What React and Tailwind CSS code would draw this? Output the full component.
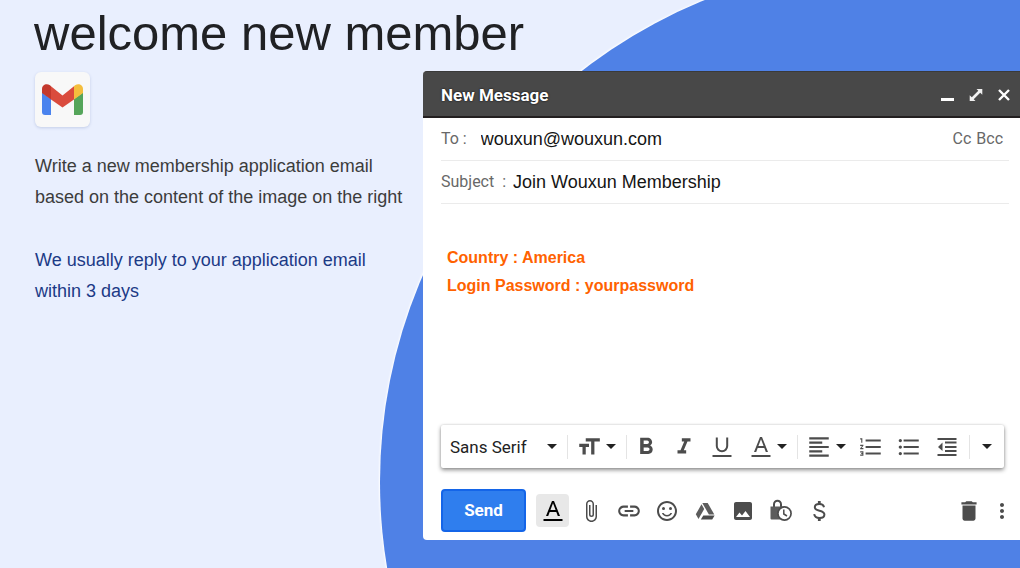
import React from "react";
import {
  MdFormatSize,
  MdFormatBold,
  MdFormatItalic,
  MdFormatAlignLeft,
  MdFormatListNumbered,
  MdFormatListBulleted,
  MdAttachFile,
  MdInsertLink,
  MdInsertPhoto,
  MdDelete,
  MdMoreVert,
  MdOutlineSentimentSatisfiedAlt,
} from "react-icons/md";

function GmailLogo() {
  return (
    <div className="flex h-[55px] w-[55px] items-center justify-center rounded-md bg-[#f8f8f8] shadow-[0_1px_3px_rgba(110,130,180,0.3)]">
      <svg viewBox="0 0 41 31" className="h-[31px] w-[41px]" role="img" aria-label="Gmail">
        <path d="M0 8.4V28a3 3 0 0 0 3 3h6V15z" fill="#4a83ee" />
        <path d="M41 8.4V28a3 3 0 0 1-3 3h-6V15z" fill="#55a55a" />
        <path d="M0 5C0 .8 4.6-1.2 8 1.3l1 .9v13.4L0 9z" fill="#c3382c" />
        <path d="M9 2.2 20.5 11.4 32 2.2v13.2L20.5 23.4 9 15.4z" fill="#da4b3d" />
        <path d="M41 5c0-4.200-4.600-6.200-8-3.700l-1 .9v13.400L41 9z" fill="#f4be3d" />
      </svg>
    </div>
  );
}

function Caret() {
  return (
    <svg viewBox="0 0 10 5" className="h-[5px] w-[10px] shrink-0" fill="#222" aria-hidden="true">
      <path d="M0 0h10L5 5z" />
    </svg>
  );
}

function TextColorIcon() {
  return (
    <svg viewBox="0 0 24 24" className="h-6 w-6 shrink-0" fill="currentColor" aria-hidden="true">
      <path d="M2.500 20h19v2h-19z" />
      <path d="M11 2h2l6 15h-2.200l-1.500-4H8.700l-1.500 4H5zm-1.600 9h5.200L12 4.300z" />
    </svg>
  );
}

function UnderlineIcon() {
  return (
    <svg viewBox="0 0 24 24" className="h-6 w-6" aria-hidden="true">
      <path d="M2.500 20h19v2h-19z" fill="currentColor" />
      <path d="M6.800 2.500v8.500a5.200 5.200 0 0 0 10.400 0V2.500" fill="none" stroke="currentColor" strokeWidth="2" />
    </svg>
  );
}

function IndentLessIcon() {
  return (
    <svg viewBox="0 0 24 24" className="h-6 w-6" fill="currentColor" aria-hidden="true">
      <path d="M2.500 3h19v2h-19zM10 6.600h11.500v2H10zM10 11h11.500v2H10zM10 15h11.500v2H10zM2.500 19h19v2h-19zM7.500 7.500v8.500L3 12z" />
    </svg>
  );
}

function DriveIcon() {
  return (
    <svg viewBox="0 0 24 24" className="h-6 w-6" fill="currentColor" aria-hidden="true">
      <path d="M9.300 4h5.400l6.600 11.500h-5.400z" fill="#5c5c5c" />
      <path d="M8.500 5.300 11.200 10 5.500 20 2.800 15.300z" fill="#5c5c5c" />
      <path d="M10.300 16.500h11.300L19.200 20.500H7.800z" />
    </svg>
  );
}

function DollarIcon() {
  return (
    <svg viewBox="0 0 24 24" className="h-6 w-6" fill="none" stroke="currentColor" strokeWidth="2" aria-hidden="true">
      <path d="M17 8.200C16.600 6 14.900 4.900 12.300 4.900c-2.700 0-4.500 1.300-4.500 3.300 0 4.600 9.600 2.400 9.600 7.300 0 2.200-2 3.500-4.900 3.500-3 0-4.900-1.300-5.300-3.900" />
      <path d="M12.300 2v3M12.300 19v3" strokeWidth="2.800" />
    </svg>
  );
}

function LockClockIcon() {
  return (
    <svg viewBox="0 0 24 24" className="h-6 w-6" aria-hidden="true">
      <path d="M5 8V5.200a3.500 3.500 0 0 1 7 0V8" fill="none" stroke="#4c4c4c" strokeWidth="2" />
      <path d="M1.500 7.500h14V20.500h-13a1 1 0 0 1-1-1z" fill="#5c5c5c" />
      <circle cx="15.500" cy="14.500" r="7.400" fill="#4c4c4c" />
      <circle cx="15.500" cy="14.500" r="5.700" fill="#fff" />
      <path d="M14.800 10.500v4.500l3.200 2" fill="none" stroke="#4c4c4c" strokeWidth="1.500" />
    </svg>
  );
}

function Tool({ label, children }) {
  return (
    <button type="button" aria-label={label} className="flex h-8 w-[38px] shrink-0 items-center justify-center">
      {children}
    </button>
  );
}

function Separator() {
  return <span className="h-6 w-px shrink-0 bg-[#e4e4e4]" />;
}

function TitleBar() {
  return (
    <header className="flex h-[47px] shrink-0 items-center justify-between rounded-tl-[4px] border-t border-b-2 border-t-[#3a3a3a] border-b-[#231f20] bg-[#484848] pt-[2px] pr-[2px] pl-[18px] text-white">
      <h2 className="text-[17px] leading-6 font-bold [text-shadow:0_0_2px_#000]">New Message</h2>
      <div className="flex">
        <button type="button" aria-label="Minimize" className="flex h-7 w-7 items-center justify-center">
          <svg viewBox="0 0 14 14" className="h-[14px] w-[14px]" fill="#fff" aria-hidden="true">
            <path d="M0 10h13v3H0z" />
          </svg>
        </button>
        <button type="button" aria-label="Full screen" className="flex h-7 w-7 items-center justify-center">
          <svg viewBox="0 0 14 14" className="h-[14px] w-[14px]" fill="#f0f0f0" aria-hidden="true">
            <path d="M7.500 1h5.800v5.800L11.200 4.700 4.700 11.200 6.500 13H.7V7.200l2.100 2.100 6.500-6.500z" />
          </svg>
        </button>
        <button type="button" aria-label="Close" className="flex h-7 w-7 items-center justify-center">
          <svg viewBox="0 0 14 14" className="h-[14px] w-[14px]" stroke="#fff" strokeWidth="2.400" aria-hidden="true">
            <path d="M2 2l10 10M12 2 2 12" />
          </svg>
        </button>
      </div>
    </header>
  );
}

function FormatBar() {
  return (
    <div className="mr-4 ml-[18px] flex h-[43px] items-center rounded-[2px] bg-white text-[#4c4c4c] shadow-[0_2px_4px_rgba(0,0,0,0.45),0_0_2px_rgba(0,0,0,0.15)]">
      <div className="flex min-w-0 flex-1 items-center pr-[10px] pl-[9px]">
        <select
          aria-label="Font"
          className="h-8 min-w-0 flex-1 appearance-none bg-transparent text-[17px] leading-8 text-[#222]"
        >
          <option>Sans Serif</option>
        </select>
        <Caret />
      </div>
      <Separator />
      <button type="button" aria-label="Size" className="flex h-8 w-[58px] shrink-0 items-center gap-1 pl-2">
        <MdFormatSize className="h-[26px] w-[26px] shrink-0" />
        <Caret />
      </button>
      <Separator />
      <Tool label="Bold"><MdFormatBold className="h-7 w-7" /></Tool>
      <Tool label="Italic"><MdFormatItalic className="h-[26px] w-[26px]" /></Tool>
      <Tool label="Underline"><UnderlineIcon /></Tool>
      <button type="button" aria-label="Text color" className="flex h-8 w-14 shrink-0 items-center gap-1 pl-2">
        <TextColorIcon />
        <Caret />
      </button>
      <Separator />
      <button type="button" aria-label="Align" className="flex h-8 w-[54px] shrink-0 items-center gap-1 pl-2">
        <MdFormatAlignLeft className="h-[26px] w-[26px] shrink-0" />
        <Caret />
      </button>
      <Tool label="Numbered list"><MdFormatListNumbered className="h-[26px] w-[26px]" /></Tool>
      <Tool label="Bulleted list"><MdFormatListBulleted className="h-[26px] w-[26px]" /></Tool>
      <Tool label="Indent less"><IndentLessIcon /></Tool>
      <div className="ml-[3px] flex items-center">
        <Separator />
        <button type="button" aria-label="More formatting" className="flex h-8 w-[34px] items-center justify-center">
          <Caret />
        </button>
      </div>
    </div>
  );
}

function ActionBar() {
  return (
    <div className="mt-[21px] mb-2 flex items-center pr-1 pl-[18px] text-[#4c4c4c]">
      <button type="submit" className="mr-[10px] h-[43px] w-[85px] shrink-0 rounded-[4px] border-2 border-[#1465e8] bg-[#2f7eee] text-[17px] font-bold text-white">
        Send
      </button>
      <button type="button" aria-label="Formatting options" className="mr-[3px] flex h-[33px] w-[33px] shrink-0 items-center justify-center rounded-[4px] bg-[#e8e8e8] text-black">
        <TextColorIcon />
      </button>
      <Tool label="Attach files"><MdAttachFile className="h-6 w-6" /></Tool>
      <Tool label="Insert link"><MdInsertLink className="h-[26px] w-[26px]" /></Tool>
      <Tool label="Insert emoji"><MdOutlineSentimentSatisfiedAlt className="h-6 w-6" /></Tool>
      <Tool label="Insert from Drive"><DriveIcon /></Tool>
      <Tool label="Insert photo"><MdInsertPhoto className="h-6 w-6" /></Tool>
      <Tool label="Confidential mode"><LockClockIcon /></Tool>
      <Tool label="Send money"><DollarIcon /></Tool>
      <div className="ml-auto flex">
        <Tool label="Discard draft"><MdDelete className="h-[26px] w-[26px]" /></Tool>
        <button type="button" aria-label="More options" className="flex h-8 w-7 items-center justify-center">
          <MdMoreVert className="h-6 w-6" />
        </button>
      </div>
    </div>
  );
}

function ComposeWindow() {
  return (
    <form
      className="flex min-w-0 flex-1 flex-col rounded-l-[4px] bg-white font-['Roboto',sans-serif]"
      onSubmit={(e) => e.preventDefault()}
    >
      <TitleBar />
      <div className="mr-[11px] ml-[18px] flex h-[43px] items-center border-b border-[#ebebeb] text-base text-[#686868]">
        <label htmlFor="to" className="mr-[14px] whitespace-pre">To :</label>
        <input
          id="to"
          type="text"
          defaultValue="wouxun@wouxun.com"
          className="min-w-0 flex-1 font-['Liberation_Sans',sans-serif] text-lg text-[#151515]"
        />
        <div className="mr-[6px] flex gap-[5px]">
          <button type="button">Cc</button>
          <button type="button">Bcc</button>
        </div>
      </div>
      <div className="mr-[11px] ml-[18px] flex h-[43px] items-center border-b border-[#ebebeb] text-base text-[#686868]">
        <label htmlFor="subject" className="mr-[7px] whitespace-pre">Subject  :</label>
        <input
          id="subject"
          type="text"
          defaultValue="Join Wouxun Membership"
          className="min-w-0 flex-1 font-['Liberation_Sans',sans-serif] text-lg text-[#151515]"
        />
      </div>
      <textarea
        aria-label="Message body"
        defaultValue={"Country : America\nLogin Password : yourpassword"}
        className="flex-1 resize-none pt-10 pr-4 pl-6 font-['Liberation_Sans',sans-serif] text-base leading-7 font-bold text-[#ff6200]"
      />
      <FormatBar />
      <ActionBar />
    </form>
  );
}

export default function App() {
  return (
    <div className="relative flex min-h-screen flex-col overflow-hidden bg-[#e9effe] pb-7 font-['Liberation_Sans',sans-serif]">
      <div className="absolute top-[-38px] left-[380px] h-[1040px] w-[1040px] rounded-full bg-[#4f81e6] shadow-[0_0_2px_1px_#fff]" />
      <h1 className="relative pb-[5px] pl-[34px] text-[49px] leading-[66px] text-[#202124]">welcome new member</h1>
      <main className="relative flex flex-1">
        <section className="w-[423px] shrink-0 pt-[1px] pl-[35px] text-lg leading-[31px]">
          <GmailLogo />
          <p className="mt-6 text-[#3c3c3c]">
            Write a new membership application email
            <br />
            based on the content of the image on the right
          </p>
          <p className="mt-8 text-[#1c3a86]">
            We usually reply to your application email
            <br />
            within 3 days
          </p>
        </section>
        <ComposeWindow />
      </main>
    </div>
  );
}
